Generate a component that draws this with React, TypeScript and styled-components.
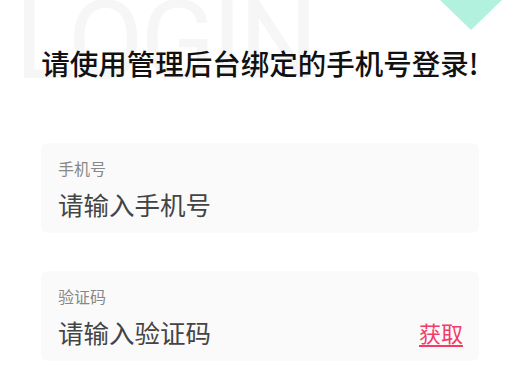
import React from 'react'
import styled, { createGlobalStyle } from 'styled-components'

const GlobalStyle = createGlobalStyle`
  html, body {
    margin: 0;
    padding: 0;
    background: #ffffff;
  }
  body {
    font-family: "Noto Sans CJK SC", "Noto Sans", sans-serif;
  }
`

const Page = styled.div`
  position: relative;
  width: 520px;
  height: 390px;
  overflow: hidden;
  background: #fff;
`

const Watermark = styled.div`
  position: absolute;
  left: 15px;
  top: -14px;
  font-family: "Roboto", sans-serif;
  font-weight: 400;
  font-size: 110px;
  line-height: 1;
  color: #f6f6f6;
  letter-spacing: -3px;
  user-select: none;
`

const Corner = styled.div`
  position: absolute;
  top: 0;
  left: 440px;
  width: 0;
  height: 0;
  border-left: 31px solid transparent;
  border-right: 31px solid transparent;
  border-top: 30px solid #b3f1df;
`

const Content = styled.div`
  position: relative;
  display: flex;
  flex-direction: column;
  padding: 44px 41px 0;
  gap: 38px;
`

const Title = styled.h1`
  margin: 0 0 23px;
  text-align: center;
  font-size: 28.5px;
  font-weight: 500;
  line-height: 38px;
  color: #111;
  white-space: nowrap;
`

const Field = styled.div`
  display: flex;
  flex-direction: column;
  height: 90px;
  box-sizing: border-box;
  padding: 14px 16px 0 17px;
  background: #fafafa;
  border-radius: 7px;
`

const Label = styled.div`
  font-size: 16px;
  line-height: 22px;
  color: #888;
`

const InputRow = styled.div`
  display: flex;
  align-items: center;
  justify-content: space-between;
  margin-top: 8px;
`

const Placeholder = styled.div`
  font-size: 25.5px;
  line-height: 34px;
  color: #444;
`

const GetCode = styled.span`
  font-size: 22px;
  line-height: 30px;
  color: #f23d68;
  text-decoration: underline;
  text-underline-offset: 3px;
`

const App = () => {
  return (
    <Page>
      <GlobalStyle />
      <Watermark>LOGIN</Watermark>
      <Corner />
      <Content>
        <Title>请使用管理后台绑定的手机号登录!</Title>
        <Field>
          <Label>手机号</Label>
          <InputRow>
            <Placeholder>请输入手机号</Placeholder>
          </InputRow>
        </Field>
        <Field>
          <Label>验证码</Label>
          <InputRow>
            <Placeholder>请输入验证码</Placeholder>
            <GetCode>获取</GetCode>
          </InputRow>
        </Field>
      </Content>
    </Page>
  )
}

export default App
